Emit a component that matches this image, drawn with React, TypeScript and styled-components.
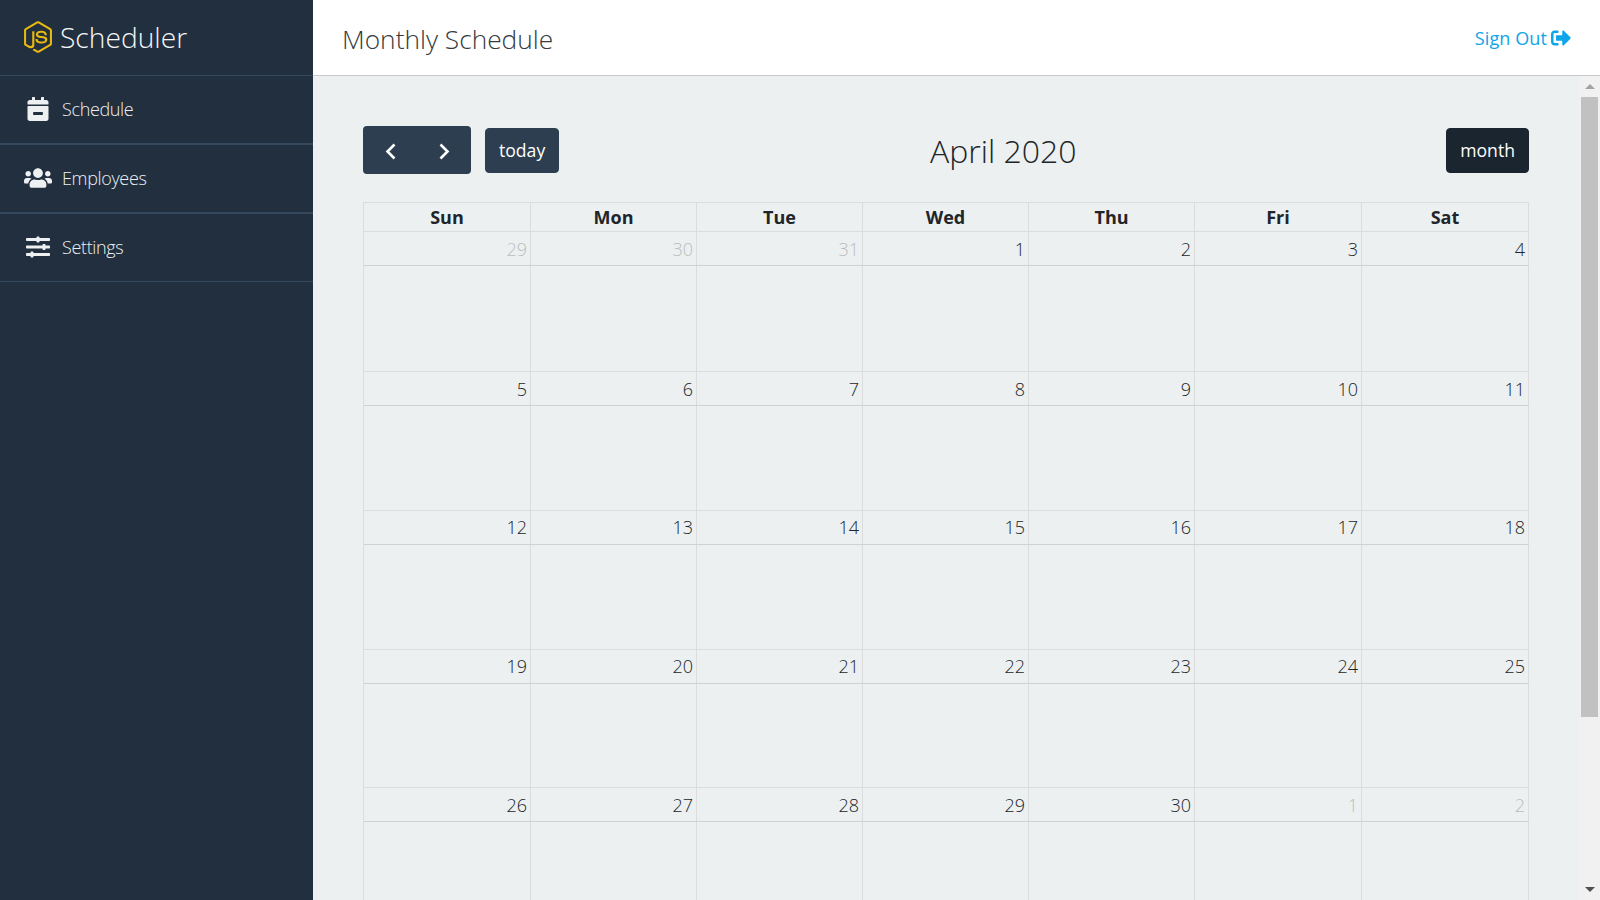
import React from "react";
import styled, { createGlobalStyle } from "styled-components";
import { FaNodeJs, FaUsers, FaSlidersH, FaCalendarMinus, FaSignOutAlt } from "react-icons/fa";

const Global = createGlobalStyle`
  html, body { margin: 0; padding: 0; height: 100%; overflow: hidden; }
  body { font-family: "Open Sans", "Noto Sans", sans-serif; }
  * { box-sizing: border-box; }
`;

const Shell = styled.div`display: flex; width: 1600px; height: 900px; overflow: hidden;`;
const Sidebar = styled.aside`width: 313px; flex: none; background: #222f3e; color: #fff;`;
const Brand = styled.div`
  height: 76px; display: flex; align-items: center; gap: 6px; padding: 0 0 2px 22px;
  border-bottom: 1px solid #34495e; font-size: 28.2px; font-weight: 300; color: #f5f6f7;
  svg { color: #e9b90e; width: 32px; height: 32px; }
`;
const NavItem = styled.div<{ $last?: boolean }>`
  height: ${p => (p.$last ? 68 : 69)}px; display: flex; align-items: center; padding-bottom: 2px;
  border-bottom: ${p => (p.$last ? 1 : 2)}px solid #34495e;
  font-size: 18px; font-weight: 300; color: #eef0f2; letter-spacing: -0.35px;
`;
const NavIcon = styled.span`width: 62px; flex: none; display: flex; justify-content: center; padding-left: 13px; font-size: 24px;`;
const Main = styled.main`flex: 1; min-width: 0; display: flex; flex-direction: column;`;
const Header = styled.header`
  height: 76px; flex: none; background: #fff; border-bottom: 1px solid #c8cacc;
  display: flex; align-items: center; justify-content: space-between; padding: 0 29px 0 29px;
`;
const Title = styled.h1`margin: 2px 0 0; font-size: 26.3px; font-weight: 300; color: #343a40;`;
const SignOut = styled.a`display: flex; align-items: center; gap: 4px; color: #0ea5e9; font-size: 18px; font-weight: 400; letter-spacing: 0.1px; svg { width: 20px; height: 20px; }`;
const Body = styled.div`flex: 1; min-height: 0; display: flex;`;
const Scroll = styled.div`flex: 1; min-width: 0; overflow: hidden; background: #ecf0f1; padding: 50px;`;
const Rail = styled.div`width: 21px; flex: none; background: #f1f1f1; display: flex; flex-direction: column; align-items: center;`;
const RailButton = styled.div`height: 21px; flex: none; width: 100%; display: flex; align-items: center; justify-content: center; padding-left: 1px;`;
const Thumb = styled.div`width: 17px; height: 620px; flex: none; background: #c1c1c1;`;
const RailFill = styled.div`flex: 1;`;
const Toolbar = styled.div`display: flex; align-items: center; justify-content: space-between; height: 48px; margin-bottom: 28px;`;
const Left = styled.div`display: flex; align-items: center; gap: 14px;`;
const Nav = styled.div`height: 48px; background: #2c3e50; border-radius: 4px; display: flex; overflow: hidden;`;
const Arrow = styled.div`width: 54px; display: flex; align-items: center; justify-content: center; color: #fff; padding-top: 2px;`;
const Btn = styled.button<{ $dark?: boolean }>`
  height: 45px; padding: 0 13px; border: 1px solid ${p => (p.$dark ? "#1a252f" : "#2c3e50")}; border-radius: 4px;
  background: ${p => (p.$dark ? "#1a252f" : "#2c3e50")}; color: #fff; font: 400 17.6px "Open Sans", sans-serif;
`;
const MonthTitle = styled.h2`margin: 0 0 0 1px; font-size: 32px; font-weight: 300; color: #212529;`;
const Grid = styled.div`border-top: 1px solid #dcdcdc; border-left: 1px solid #dcdcdc; width: 1166px;`;
const Row = styled.div`display: grid; grid-template-columns: 167px 166px 166px 166px 166px 167px 167px;`;
const Head = styled.div`height: 29px; border-right: 1px solid #dcdcdc; border-bottom: 1px solid #dcdcdc; text-align: center; font-size: 18px; font-weight: 700; line-height: 29px; color: #212529;`;
const Cell = styled.div<{ $h: number }>`height: ${p => p.$h}px; border-right: 1px solid #dcdcdc; border-bottom: 1px solid #dcdcdc;`;
const Num = styled.div<{ $other?: boolean; $lh: number }>`height: 34px; border-bottom: 1px solid #cfd1d2; text-align: right; padding-right: 4px; font-size: 18px; font-weight: 300; line-height: ${p => p.$lh}px; color: ${p => (p.$other ? "#bbbdbe" : "#212529")}; margin-right: -1px;`;

const Chevron = ({ left }: { left?: boolean }) => (
  <svg width="11" height="17" viewBox="0 0 11 17" fill="none" stroke="currentColor" strokeWidth="2.6">
    <path d={left ? "M9.5 1.5L2.5 8.5L9.5 15.5" : "M1.5 1.5L8.5 8.5L1.5 15.5"} />
  </svg>
);

const days = ["Sun", "Mon", "Tue", "Wed", "Thu", "Fri", "Sat"];
const plain = (a: number[]) => a.map(n => [n, false] as [number, boolean]);
const weeks: { h: number; lh: number; cells: [number, boolean][] }[] = [
  { h: 140, lh: 35, cells: [[29, true], [30, true], [31, true], [1, false], [2, false], [3, false], [4, false]] },
  { h: 139, lh: 35, cells: plain([5, 6, 7, 8, 9, 10, 11]) },
  { h: 139, lh: 33, cells: plain([12, 13, 14, 15, 16, 17, 18]) },
  { h: 138, lh: 33, cells: plain([19, 20, 21, 22, 23, 24, 25]) },
  { h: 139, lh: 35, cells: [[26, false], [27, false], [28, false], [29, false], [30, false], [1, true], [2, true]] },
];

export default function App() {
  return (
    <Shell>
      <Global />
      <Sidebar>
        <Brand><FaNodeJs />Scheduler</Brand>
        <NavItem><NavIcon><FaCalendarMinus /></NavIcon>Schedule</NavItem>
        <NavItem><NavIcon><FaUsers size={28} /></NavIcon>Employees</NavItem>
        <NavItem $last><NavIcon><FaSlidersH /></NavIcon>Settings</NavItem>
      </Sidebar>
      <Main>
        <Header>
          <Title>Monthly Schedule</Title>
          <SignOut>Sign Out <FaSignOutAlt /></SignOut>
        </Header>
        <Body>
          <Scroll>
            <Toolbar>
              <Left>
                <Nav><Arrow><Chevron left /></Arrow><Arrow><Chevron /></Arrow></Nav>
                <Btn>today</Btn>
              </Left>
              <MonthTitle>April 2020</MonthTitle>
              <Btn $dark>month</Btn>
            </Toolbar>
            <Grid>
              <Row>{days.map(d => <Head key={d}>{d}</Head>)}</Row>
              {weeks.map((w, i) => (
                <Row key={i}>
                  {w.cells.map(([n, o], j) => <Cell key={j} $h={w.h}><Num $other={o} $lh={w.lh}>{n}</Num></Cell>)}
                </Row>
              ))}
            </Grid>
          </Scroll>
          <Rail>
            <RailButton><svg width="10" height="5"><path d="M5 0L10 5H0z" fill="#a3a3a3" /></svg></RailButton>
            <Thumb />
            <RailFill />
            <RailButton><svg width="10" height="5"><path d="M5 5L10 0H0z" fill="#505050" /></svg></RailButton>
          </Rail>
        </Body>
      </Main>
    </Shell>
  );
}
